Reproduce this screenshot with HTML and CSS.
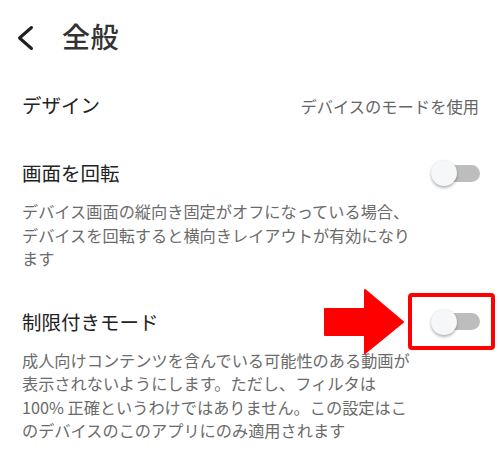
FILE: index.html
```html
<!DOCTYPE html>
<html lang="ja">
<head>
<meta charset="utf-8">
<title>全般</title>
<link rel="stylesheet" href="styles.css">
</head>
<body>
<header class="header">
  <svg class="back" width="18" height="26" viewBox="0 0 18 26" aria-hidden="true">
    <path d="M15.5 2.5 L3.5 13 L15.5 23.5" fill="none" stroke="#1f1f1f" stroke-width="3" stroke-linecap="round" stroke-linejoin="round"/>
  </svg>
  <h1 class="title">全般</h1>
</header>

<div class="row design">
  <span class="label">デザイン</span>
  <span class="value">デバイスのモードを使用</span>
</div>

<section class="setting rotate">
  <div class="row head">
    <span class="label">画面を回転</span>
    <span class="switch"><span class="track"></span><span class="thumb"></span></span>
  </div>
  <p class="desc">デバイス画面の縦向き固定がオフになっている場合、デバイスを回転すると横向きレイアウトが有効になります</p>
</section>

<section class="setting restrict">
  <div class="row head annotated">
    <span class="label">制限付きモード</span>
    <span class="switch"><span class="track"></span><span class="thumb"></span></span>
    <svg class="arrow" width="84" height="68" viewBox="0 0 84 68" aria-hidden="true">
      <polygon points="3,21 43,21 43,2 81,34 43,65 43,47 3,47" fill="#fe0000" stroke="#fe0000" stroke-width="2" stroke-linejoin="round"/>
    </svg>
    <span class="highlight"></span>
  </div>
  <p class="desc">成人向けコンテンツを含んでいる可能性のある動画が表示されないようにします。ただし、フィルタは 100% 正確というわけではありません。この設定はこのデバイスのこのアプリにのみ適用されます</p>
</section>
</body>
</html>
```

FILE: styles.css
```css
* { box-sizing: border-box; }

html, body {
  margin: 0;
  padding: 0;
  background: #ffffff;
}

body {
  width: 500px;
  height: 469px;
  overflow: hidden;
  font-family: "Noto Sans CJK JP", "Noto Sans", sans-serif;
  color: #212121;
}

.header {
  height: 72px;
  display: flex;
  align-items: center;
  padding-left: 16px;
}

.back {
  display: block;
  margin-top: 3px;
}

.title {
  margin: 0 0 0 28px;
  font-size: 28px;
  font-weight: 500;
  line-height: 1;
  color: #333333;
  letter-spacing: 0.5px;
}

.row {
  display: flex;
  align-items: center;
  justify-content: space-between;
  padding: 0 21px 0 22px;
}

.label {
  font-size: 19.5px;
  line-height: 1;
  color: #222222;
}

.design {
  height: 66px;
}

.value {
  font-size: 16.3px;
  line-height: 1;
  color: #666666;
  margin-top: 2px;
}

.head {
  height: 54px;
}

.rotate .head {
  margin-top: 8px;
}

.restrict .head {
  margin-top: 24px;
}

.desc {
  margin: 0;
  padding: 0 0 0 22px;
  width: 416px;
  font-size: 16.2px;
  line-height: 23.5px;
  color: #6b6b6b;
}

.switch {
  position: relative;
  width: 48px;
  height: 26px;
  flex: none;
}

.track {
  position: absolute;
  left: 4px;
  top: 4.5px;
  width: 45px;
  height: 17px;
  border-radius: 9px;
  background: #bdbdbd;
}

.thumb {
  position: absolute;
  left: 0;
  top: 0;
  width: 26px;
  height: 26px;
  border-radius: 50%;
  background: #f6f7f9;
  box-shadow: 0 2px 3px rgba(0, 0, 0, 0.28), 0 0 1px rgba(0, 0, 0, 0.12);
}

.annotated {
  position: relative;
}

.arrow {
  position: absolute;
  left: 322px;
  top: -7px;
}

.highlight {
  position: absolute;
  right: 5px;
  top: -2px;
  width: 87px;
  height: 57px;
  border: 4px solid #fe0000;
  border-radius: 4px;
}
```
